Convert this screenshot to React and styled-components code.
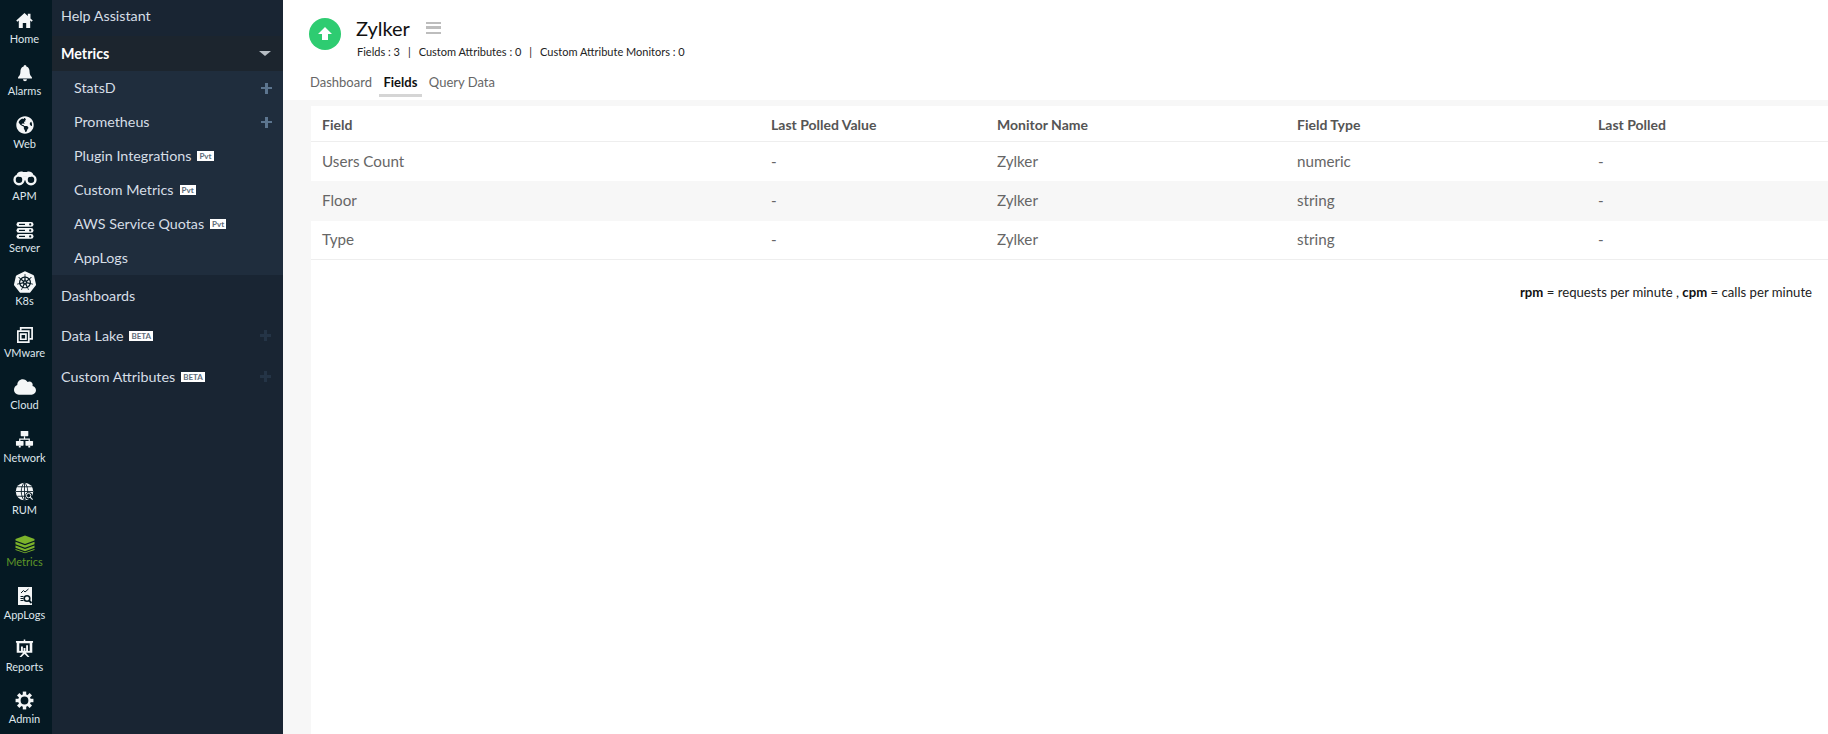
import React from 'react';
import styled, { createGlobalStyle } from 'styled-components';
import { FaGlobeAmericas, FaCloud } from 'react-icons/fa';
import { SiKubernetes } from 'react-icons/si';

const railBg = '#051923';

const GlobalStyle = createGlobalStyle`
  html, body {
    margin: 0;
    padding: 0;
    height: 100%;
    overflow: hidden;
    background: #fff;
    font-family: Lato, "Open Sans", sans-serif;
  }
`;

const Page = styled.div`
  display: flex;
  width: 1828px;
  height: 734px;
  overflow: hidden;
`;

const Rail = styled.nav`
  width: 52px;
  flex: none;
  background: ${railBg};
  padding: 8px 3px 0 0;
  box-sizing: border-box;
`;

const RailItem = styled.div`
  height: 52.35px;
  display: flex;
  flex-direction: column;
  align-items: center;
  color: ${p => (p.$active ? '#5f9628' : '#dfe6ec')};
  font-size: 11px;
  line-height: 14px;
`;

const IconSlot = styled.div`
  height: 24px;
  padding-top: 1px;
  box-sizing: border-box;
  display: flex;
  align-items: center;
  justify-content: center;

  svg {
    width: ${p => p.$size || 18}px;
    height: ${p => p.$size || 18}px;
    display: block;
    fill: ${p => (p.$active ? '#7cb32b' : '#f4f6f7')};
  }
`;

const Side = styled.aside`
  width: 231px;
  flex: none;
  background: #192533;
  color: #d6dee6;
  font-size: 14.3px;
`;

const TopLink = styled.div`
  height: ${p => p.$h || 36}px;
  display: flex;
  align-items: center;
  padding: 0 12px ${p => p.$lift || 0}px 9px;
  box-sizing: border-box;
  justify-content: space-between;
`;

const GroupHead = styled(TopLink)`
  background: #1c252e;
  color: #fff;
  font-weight: 700;
  height: 35px;
`;

const Caret = styled.span`
  width: 0;
  height: 0;
  border-left: 6px solid transparent;
  border-right: 6px solid transparent;
  border-top: 5px solid #b6bdc4;
`;

const SubList = styled.div`
  background: #1f2d3d;
  margin-bottom: 1px;
`;

const SubItem = styled.div`
  height: 34px;
  display: flex;
  align-items: center;
  justify-content: space-between;
  padding: 0 11px ${p => (p.$plus ? 2 : 1)}px 22px;
  box-sizing: border-box;
`;

const Label = styled.span`
  display: inline-flex;
  align-items: center;
  gap: 6px;
`;

const Tag = styled.span`
  background: #fff;
  color: #5d6b79;
  font-size: 8px;
  font-weight: 700;
  line-height: 10px;
  padding: 0 2px;
`;

const Plus = styled.span`
  position: relative;
  width: 11px;
  height: 11px;
  margin-top: ${p => (p.$dim ? 0 : '2px')};

  &::before, &::after {
    content: '';
    position: absolute;
    background: ${p => (p.$dim ? '#243446' : '#5c758f')};
  }
  &::before { left: 0; right: 0; top: 4px; height: 2.5px; }
  &::after { top: 0; bottom: 0; left: 4px; width: 2.5px; }
`;

const Main = styled.main`
  flex: 1;
  min-width: 0;
  display: flex;
  flex-direction: column;
  background: #f7f7f7;
`;

const Header = styled.header`
  background: #fff;
  height: 100px;
  padding: 16px 0 0 26px;
  box-sizing: border-box;
`;

const TitleRow = styled.div`
  display: flex;
  gap: 15px;
`;

const StatusDot = styled.div`
  width: 32px;
  height: 32px;
  margin-top: 2px;
  border-radius: 50%;
  background: #2ecc71;
  display: flex;
  align-items: center;
  justify-content: center;

  svg { width: 16px; height: 16px; fill: #fff; }
`;

const TitleLine = styled.div`
  display: flex;
  align-items: center;
  gap: 16px;
  height: 24px;
  font-size: 20px;
  color: #111;
`;

const Burger = styled.span`
  width: 15px;
  height: 12px;
  border-top: 2.5px solid #bdbdbd;
  border-bottom: 2.5px solid #bdbdbd;
  position: relative;
  box-sizing: border-box;

  &::after {
    content: '';
    position: absolute;
    left: 0;
    right: 0;
    top: 2.2px;
    height: 2.5px;
    background: #bdbdbd;
  }
`;

const Stats = styled.div`
  display: flex;
  gap: 8px;
  margin: 5px 0 0 1px;
  font-size: 11px;
  line-height: 14px;
  color: #222;
`;

const Tabs = styled.div`
  display: flex;
  gap: 7px;
  margin: 10px 0 0 1px;
`;

const Tab = styled.div`
  height: 28px;
  line-height: 26px;
  padding: 0 ${p => (p.$active ? '4.5px' : 0)};
  box-sizing: border-box;
  font-size: 13px;
  color: ${p => (p.$active ? '#111' : '#666')};
  font-weight: ${p => (p.$active ? 700 : 400)};
  border-bottom: ${p => (p.$active ? '3px solid #d5d5d5' : '0')};
`;

const Content = styled.div`
  flex: 1;
  margin: 6px 0 0 28px;
  background: #fff;
`;

const Row = styled.div`
  display: grid;
  grid-template-columns: 449px 226px 300px 301px 1fr;
  align-items: center;
  padding: 0 0 2px 11px;
  height: ${p => p.$h}px;
  box-sizing: border-box;
  background: ${p => (p.$alt ? '#f7f7f7' : '#fff')};
  border-bottom: ${p => (p.$line ? '1px solid #eee' : '0')};
  color: #666;
  font-size: 15.2px;
`;

const HeadRow = styled(Row)`
  padding: 1px 0 0 11px;
  font-size: 14px;
  font-weight: 700;
  color: #555;
`;

const Legend = styled.p`
  margin: 24px 16px 0 0;
  text-align: right;
  font-size: 13.15px;
  color: #222;

  b { color: #111; }
`;

const HomeIcon = () => (
  <svg viewBox="0 0 20 20"><path d="M10 2L1.3 10l1.2 1.3L4 10v8h4.2v-5.5h3.6V18H16v-8l1.5 1.3 1.2-1.3-2.4-2.2V3h-2.8v2.2z" /></svg>
);

const BellIcon = () => (
  <svg viewBox="0 0 20 20"><path d="M10 1a1.6 1.6 0 0 1 1.5 1.8c3 .8 3.6 3.5 3.6 6.2 0 3 1.4 4.5 2.6 5.6V16H2.3v-1.4C3.5 13.5 4.9 12 4.9 9c0-2.7.6-5.4 3.6-6.2A1.6 1.6 0 0 1 10 1zM7.8 17h4.4a2.2 2.2 0 0 1-4.4 0z" /></svg>
);

const BinocularsIcon = () => (
  <svg viewBox="0 0 20 20">
    <path d="M3 7c1-2 3.5-3 5.5-2h3c2-1 4.5 0 5.5 2l-2 2H5z" />
    <circle cx="5" cy="11.5" r="3.7" fill="none" stroke="#f4f6f7" strokeWidth="2" />
    <circle cx="15" cy="11.5" r="3.7" fill="none" stroke="#f4f6f7" strokeWidth="2" />
    <rect x="8.5" y="8.5" width="3" height="3.5" />
  </svg>
);

const ServerIcon = () => (
  <svg viewBox="0 0 20 20">
    {[2, 8, 14].map(y => (
      <g key={y}>
        <rect x="1.5" y={y} width="17" height="4.8" rx="2.4" />
        <rect x="4" y={y + 1.8} width="6" height="1.2" fill={railBg} />
        <circle cx="15.2" cy={y + 2.4} r="1.1" fill={railBg} />
      </g>
    ))}
  </svg>
);

const VmwareIcon = () => (
  <svg viewBox="0 0 20 20">
    <path fill="none" stroke="#f4f6f7" strokeWidth="1.8" d="M6 6V3h12v11.5h-3" />
    <path fill="none" stroke="#f4f6f7" strokeWidth="1.8" d="M3 6.5h11.5V18H3zM6 9.5h5.5V15H6z" />
  </svg>
);

const NetworkIcon = () => (
  <svg viewBox="0 0 20 20">
    <rect x="6" y="1" width="8" height="5.5" rx=".6" />
    <path fill="none" stroke="#f4f6f7" strokeWidth="1.3" d="M10 6.5v3M5 12V9.5h10V12" />
    <rect x="1" y="11.5" width="8" height="5" rx=".6" />
    <rect x="11" y="11.5" width="8" height="5" rx=".6" />
    <path d="M4 16.5h2v2H4zM14 16.5h2v2h-2z" />
  </svg>
);

const RumIcon = () => (
  <svg viewBox="0 0 20 20">
    <circle cx="10" cy="10" r="9.2" />
    <path fill="none" stroke={railBg} strokeWidth=".9" d="M10 .8v18.4M1 10h18M2.5 5h15M2.5 15h15M10 .8C5.5 4 5.5 16 10 19.2M10 .8c4.5 3.2 4.5 15.2 0 18.4" />
    <circle cx="14.5" cy="14.5" r="3.8" fill={railBg} />
    <circle cx="14.3" cy="14.3" r="2.3" fill="none" stroke="#f4f6f7" strokeWidth="1" />
    <path stroke="#f4f6f7" strokeWidth="1.2" d="M16 16l2.5 2.5" />
  </svg>
);

const MetricsIcon = () => (
  <svg viewBox="0 0 20 20">
    <path d="M10 1.5l9.5 3.5v1.5L10 10 .5 6.5V5z" />
    <path d="M.5 7.8L10 11.3l9.5-3.5v2.4L10 13.7.5 10.2z" />
    <path d="M.5 11.4L10 14.9l9.5-3.5v2.4L10 17.3.5 13.8z" />
    <path d="M.5 14.9L10 18.4l9.5-3.5v1.2L10 19.3.5 16.1z" />
  </svg>
);

const AppLogsIcon = () => (
  <svg viewBox="0 0 20 20">
    <path d="M3 1h14v18H3z" />
    <path fill="none" stroke={railBg} strokeWidth="1" d="M6 7l2.5-2.5L10 6l3.5-3M5.5 10.5h3M5.5 12.5h3M5.5 14.5h3" />
    <circle cx="12" cy="12.5" r="2.8" fill="none" stroke={railBg} strokeWidth="1.6" />
    <path stroke={railBg} strokeWidth="1.8" d="M14 14.5l2.5 2.5" />
  </svg>
);

const ReportsIcon = () => (
  <svg viewBox="0 0 20 20">
    <path d="M9.2 .5h1.6V2H19v2h-.8v10.5H11.5l3.8 4.5h-2L10 15.8 6.7 19h-2l3.8-4.5H1.8V4H1V2h8.2z" />
    <path fill={railBg} d="M4.5 4.5h11v8h-11z" />
    <path d="M6.3 8h2v4.5h-2zM9 9.5h2v3H9zM11.7 6.5h2v6h-2z" />
  </svg>
);

const GearIcon = () => (
  <svg viewBox="0 0 20 20">
    {[0, 45, 90, 135, 180, 225, 270, 315].map(a => (
      <rect key={a} x="8.2" y=".6" width="3.6" height="4" transform={`rotate(${a} 10 10)`} />
    ))}
    <circle cx="10" cy="10" r="5.4" fill="none" stroke="#f4f6f7" strokeWidth="2.6" />
  </svg>
);

const railItems = [
  { name: 'Home', icon: <HomeIcon />, size: 19 },
  { name: 'Alarms', icon: <BellIcon />, size: 18 },
  { name: 'Web', icon: <FaGlobeAmericas />, size: 18 },
  { name: 'APM', icon: <BinocularsIcon />, size: 24 },
  { name: 'Server', icon: <ServerIcon />, size: 20 },
  { name: 'K8s', icon: <SiKubernetes />, size: 22 },
  { name: 'VMware', icon: <VmwareIcon />, size: 19 },
  { name: 'Cloud', icon: <FaCloud />, size: 22 },
  { name: 'Network', icon: <NetworkIcon />, size: 19 },
  { name: 'RUM', icon: <RumIcon />, size: 19 },
  { name: 'Metrics', active: true, icon: <MetricsIcon />, size: 20 },
  { name: 'AppLogs', icon: <AppLogsIcon />, size: 20 },
  { name: 'Reports', icon: <ReportsIcon />, size: 19 },
  { name: 'Admin', icon: <GearIcon />, size: 19 },
];

const subItems = [
  { name: 'StatsD', plus: true },
  { name: 'Prometheus', plus: true },
  { name: 'Plugin Integrations', tag: 'Pvt' },
  { name: 'Custom Metrics', tag: 'Pvt' },
  { name: 'AWS Service Quotas', tag: 'Pvt' },
  { name: 'AppLogs' },
];

const columns = ['Field', 'Last Polled Value', 'Monitor Name', 'Field Type', 'Last Polled'];

const rows = [
  ['Users Count', '-', 'Zylker', 'numeric', '-'],
  ['Floor', '-', 'Zylker', 'string', '-'],
  ['Type', '-', 'Zylker', 'string', '-'],
];

const App = () => (
  <Page>
    <GlobalStyle />
    <Rail>
      {railItems.map(item => (
        <RailItem key={item.name} $active={item.active}>
          <IconSlot $size={item.size} $active={item.active}>{item.icon}</IconSlot>
          {item.name}
        </RailItem>
      ))}
    </Rail>
    <Side>
      <TopLink $lift={6}>Help Assistant</TopLink>
      <GroupHead>Metrics<Caret /></GroupHead>
      <SubList>
        {subItems.map(item => (
          <SubItem key={item.name} $plus={item.plus}>
            <Label>{item.name}{item.tag && <Tag>{item.tag}</Tag>}</Label>
            {item.plus && <Plus />}
          </SubItem>
        ))}
      </SubList>
      <TopLink $h={38}>Dashboards</TopLink>
      <TopLink $h={43}><Label>Data Lake <Tag>BETA</Tag></Label><Plus $dim /></TopLink>
      <TopLink $h={39}><Label>Custom Attributes <Tag>BETA</Tag></Label><Plus $dim /></TopLink>
    </Side>
    <Main>
      <Header>
        <TitleRow>
          <StatusDot>
            <svg viewBox="0 0 16 16"><path d="M8 1l7 7h-4v6H5V8H1z" /></svg>
          </StatusDot>
          <div>
            <TitleLine>Zylker<Burger /></TitleLine>
            <Stats>
              <span>Fields : 3</span><span>|</span>
              <span>Custom Attributes : 0</span><span>|</span>
              <span>Custom Attribute Monitors : 0</span>
            </Stats>
          </div>
        </TitleRow>
        <Tabs>
          <Tab>Dashboard</Tab>
          <Tab $active>Fields</Tab>
          <Tab>Query Data</Tab>
        </Tabs>
      </Header>
      <Content>
        <HeadRow $h={36} $line>
          {columns.map(col => <div key={col}>{col}</div>)}
        </HeadRow>
        {rows.map((row, i) => (
          <Row key={row[0]} $h={i === 1 ? 40 : 39} $alt={i === 1} $line={i === 2}>
            {row.map((cell, j) => <div key={j}>{cell}</div>)}
          </Row>
        ))}
        <Legend><b>rpm</b> = requests per minute , <b>cpm</b> = calls per minute</Legend>
      </Content>
    </Main>
  </Page>
);

export default App;
